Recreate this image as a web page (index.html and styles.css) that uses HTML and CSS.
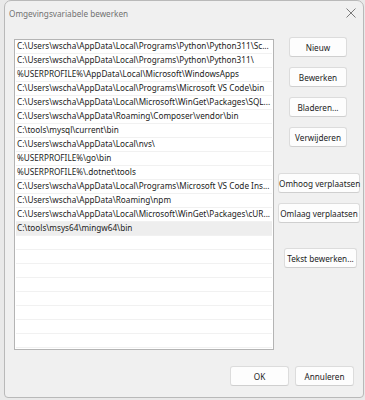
FILE: index.html
```html
<!DOCTYPE html>
<html lang="nl">
<head>
<meta charset="utf-8">
<title>Omgevingsvariabele bewerken</title>
<link rel="stylesheet" href="styles.css">
</head>
<body>
<div class="backdrop">
  <div class="dialog">
    <div class="titlebar">
      <span class="title">Omgevingsvariabele bewerken</span>
      <svg class="close" width="10" height="10" viewBox="0 0 10 10"><path d="M0.5 0.5 L9.5 9.5 M9.5 0.5 L0.5 9.5" stroke="#7a7a7a" stroke-width="1" fill="none"/></svg>
    </div>
    <div class="main">
      <div class="list">
        <div class="row">C:\Users\wscha\AppData\Local\Programs\Python\Python311\Sc...</div>
        <div class="row">C:\Users\wscha\AppData\Local\Programs\Python\Python311\</div>
        <div class="row">%USERPROFILE%\AppData\Local\Microsoft\WindowsApps</div>
        <div class="row">C:\Users\wscha\AppData\Local\Programs\Microsoft VS Code\bin</div>
        <div class="row">C:\Users\wscha\AppData\Local\Microsoft\WinGet\Packages\SQL...</div>
        <div class="row">C:\Users\wscha\AppData\Roaming\Composer\vendor\bin</div>
        <div class="row">C:\tools\mysql\current\bin</div>
        <div class="row">C:\Users\wscha\AppData\Local\nvs\</div>
        <div class="row">%USERPROFILE%\go\bin</div>
        <div class="row">%USERPROFILE%\.dotnet\tools</div>
        <div class="row">C:\Users\wscha\AppData\Local\Programs\Microsoft VS Code Ins...</div>
        <div class="row">C:\Users\wscha\AppData\Roaming\npm</div>
        <div class="row">C:\Users\wscha\AppData\Local\Microsoft\WinGet\Packages\cUR...</div>
        <div class="row selected">C:\tools\msys64\mingw64\bin</div>
        <div class="row"></div><div class="row"></div><div class="row"></div><div class="row"></div>
        <div class="row"></div><div class="row"></div><div class="row"></div><div class="row"></div>
        <div class="row"></div>
      </div>
      <div class="actions">
        <button class="btn small">Nieuw</button>
        <button class="btn small">Bewerken</button>
        <button class="btn small">Bladeren...</button>
        <button class="btn small">Verwijderen</button>
        <button class="btn wide first-move">Omhoog verplaatsen</button>
        <button class="btn wide">Omlaag verplaatsen</button>
        <button class="btn medium text-edit">Tekst bewerken...</button>
      </div>
    </div>
    <div class="footer">
      <button class="btn foot">OK</button>
      <button class="btn foot">Annuleren</button>
    </div>
  </div>
</div>
</body>
</html>
```

FILE: styles.css
```css
* { box-sizing: border-box; }
html, body { margin: 0; padding: 0; }
body {
  width: 365px;
  height: 400px;
  overflow: hidden;
  background: #e9e9e9;
  font-family: "Noto Sans", "Open Sans", sans-serif;
  font-size: 8.2px;
  color: #1b1b1b;
}
.backdrop {
  padding-left: 4px;
}
.dialog {
  width: 360px;
  height: 398px;
  background: #f0f0f0;
  border: 1px solid #b9b9b9;
  border-radius: 7px 7px 4px 4px;
  display: flex;
  flex-direction: column;
}
.titlebar {
  height: 28px;
  display: flex;
  align-items: center;
  justify-content: space-between;
  padding: 0 7px 4px 4px;
}
.title {
  color: #707070;
  font-size: 8.2px;
}
.close { display: block; }
.main {
  display: flex;
  align-items: flex-start;
}
.list {
  margin-left: 9px;
  margin-top: 10px;
  width: 260px;
  height: 311px;
  background: #ffffff;
  border: 1px solid #b4b4b4;
  overflow: hidden;
  padding: 0 1px;
}
.row {
  height: 14px;
  line-height: 12px;
  padding-left: 1px;
  border-bottom: 1px solid #f1f1f1;
  white-space: nowrap;
  overflow: hidden;
}
.row.selected {
  background: #eeeeee;
}
.actions {
  margin-left: 4px;
  margin-top: 8px;
  width: 82px;
  display: flex;
  flex-direction: column;
  align-items: flex-start;
}
.btn {
  font-family: inherit;
  font-size: 8.2px;
  color: #1b1b1b;
  background: #fdfdfd;
  border: 1px solid #dcdcdc;
  border-bottom-color: #cfcfcf;
  border-radius: 3px;
  height: 20px;
  padding: 0;
  white-space: nowrap;
}
.btn.small {
  width: 58px;
  margin-left: 11px;
  margin-bottom: 10px;
}
.btn.wide {
  width: 82px;
  margin-bottom: 10px;
}
.btn.first-move { margin-top: 16px; }
.btn.medium {
  width: 73px;
  margin-left: 6px;
}
.btn.text-edit { margin-top: 15px; }
.footer {
  margin-top: 16px;
  display: flex;
  justify-content: flex-end;
  gap: 6px;
  padding-right: 9px;
}
.btn.foot {
  width: 59px;
  height: 20px;
}
```
